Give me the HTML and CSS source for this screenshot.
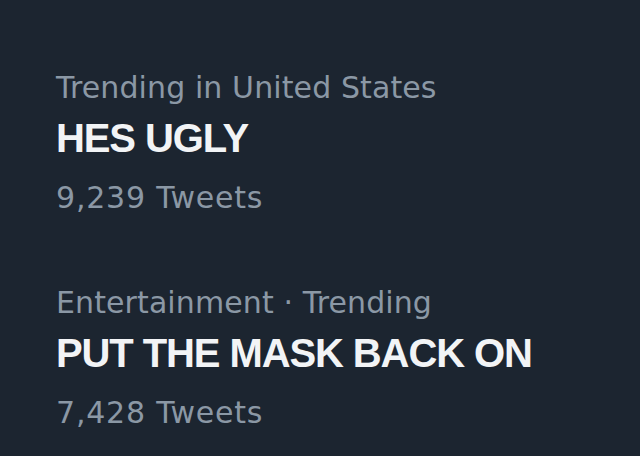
FILE: index.html
```html
<!DOCTYPE html>
<html>
<head>
<meta charset="utf-8">
<link rel="stylesheet" href="styles.css">
</head>
<body>
<main class="trends">
  <section class="trend">
    <div class="meta">Trending in United States</div>
    <div class="title">HES UGLY</div>
    <div class="count">9,239 Tweets</div>
  </section>
  <section class="trend">
    <div class="meta">Entertainment · Trending</div>
    <div class="title">PUT THE MASK BACK ON</div>
    <div class="count">7,428 Tweets</div>
  </section>
</main>
</body>
</html>
```
FILE: styles.css
```css
html, body {
  margin: 0;
  padding: 0;
  width: 640px;
  height: 456px;
  overflow: hidden;
  background: #1c2530;
}
.trends {
  display: flex;
  flex-direction: column;
  gap: 50px;
  padding: 60px 0 0 56px;
  font-family: "Liberation Sans", Arial, sans-serif;
}
.trend {
  display: flex;
  flex-direction: column;
}
.meta, .count {
  color: #8b98a5;
  font-family: "DejaVu Sans", "Liberation Sans", sans-serif;
  font-size: 30px;
  line-height: 55px;
  letter-spacing: 0.1px;
}
.count {
  letter-spacing: 0.8px;
}
.title {
  color: #f2f4f6;
  font-size: 40px;
  font-weight: 700;
  line-height: 47px;
  margin-bottom: 8px;
  letter-spacing: -1.1px;
}
```
